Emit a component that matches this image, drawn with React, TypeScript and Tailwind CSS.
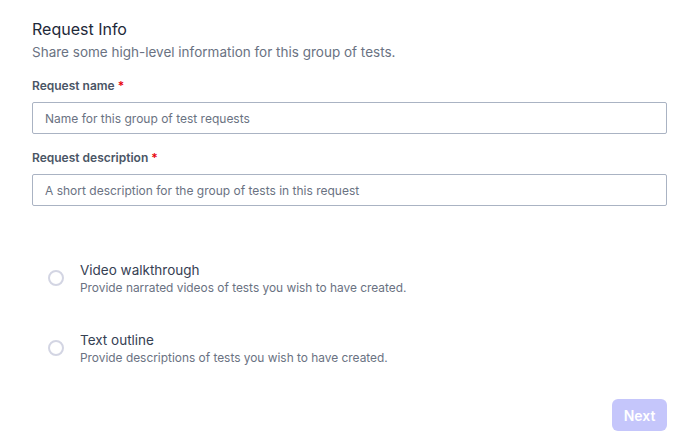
import React, { useState } from "react";

const OPTIONS = [
  {
    id: "video",
    title: "Video walkthrough",
    desc: "Provide narrated videos of tests you wish to have created.",
  },
  {
    id: "text",
    title: "Text outline",
    desc: "Provide descriptions of tests you wish to have created.",
  },
];

export default function App() {
  const [choice, setChoice] = useState<string | null>(null);

  return (
    <div
      className="w-[675px] h-[445px] bg-white pl-8 pr-2 pt-[19px]"
      style={{ fontFamily: "Inter, 'Noto Sans', sans-serif" }}
    >
      {/* Header */}
      <h2 className="text-[16px] leading-5 text-gray-800">Request Info</h2>
      <p className="mt-[3px] text-[13.5px] leading-5 text-gray-500">
        Share some high-level information for this group of tests.
      </p>

      {/* Fields */}
      <div className="mt-[16px] flex flex-col">
        <label className="text-[12px] leading-4 font-semibold text-gray-600">
          Request name <span className="text-red-600">*</span>
        </label>
        <input
          className="mt-[8px] h-[32px] w-full rounded-[2px] border border-[#aab3c3] px-3 text-[12px] text-gray-700 placeholder:text-gray-500 outline-none"
          placeholder="Name for this group of test requests"
        />

        <label className="mt-[16px] text-[12px] leading-4 font-semibold text-gray-600">
          Request description <span className="text-red-600">*</span>
        </label>
        <input
          className="mt-[8px] h-[32px] w-full rounded-[2px] border border-[#aab3c3] px-3 text-[12px] text-gray-700 placeholder:text-gray-500 outline-none"
          placeholder="A short description for the group of tests in this request"
        />
      </div>

      {/* Options */}
      <div className="mt-[54px] flex flex-col gap-[34px] pl-4">
        {OPTIONS.map((opt) => (
          <label key={opt.id} className="flex items-center gap-4 cursor-pointer">
            <input
              type="radio"
              name="kind"
              checked={choice === opt.id}
              onChange={() => setChoice(opt.id)}
              className="appearance-none w-4 h-4 rounded-full border-2 border-[#d3d5e3] checked:border-[5px] checked:border-indigo-500"
            />
            <div className="flex flex-col">
              <span className="text-[13.5px] leading-5 text-gray-700">{opt.title}</span>
              <span className="text-[11.9px] leading-4 text-gray-500">{opt.desc}</span>
            </div>
          </label>
        ))}
      </div>

      {/* Footer */}
      <div className="mt-[33px] flex justify-end">
        <button className="h-[32px] w-[55px] rounded-md bg-[#c5c6fb] text-[14px] font-semibold text-white">
          Next
        </button>
      </div>
    </div>
  );
}
